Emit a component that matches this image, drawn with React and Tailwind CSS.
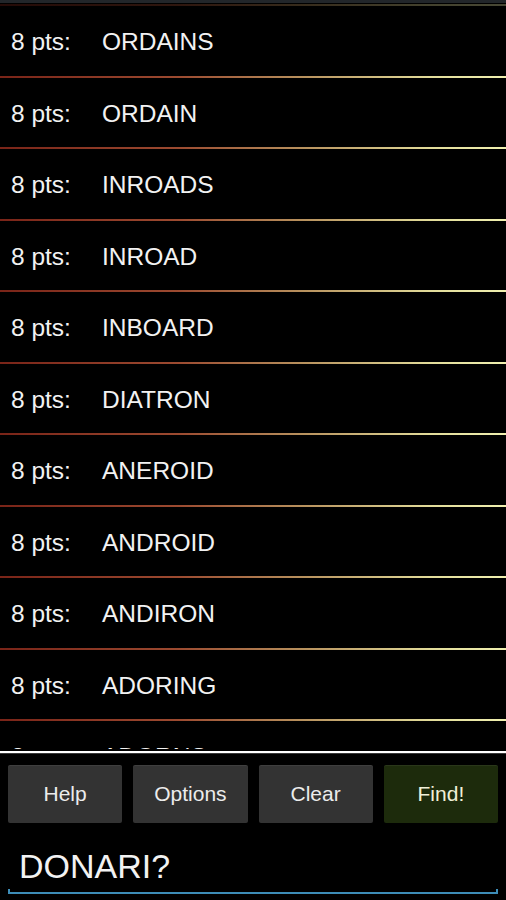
import React from "react";

const words = [
  "ORDAINS",
  "ORDAIN",
  "INROADS",
  "INROAD",
  "INBOARD",
  "DIATRON",
  "ANEROID",
  "ANDROID",
  "ANDIRON",
  "ADORING",
  "ADORNS",
];

function Divider({ faint }) {
  return (
    <div
      className={
        "h-[2px] w-full shrink-0 bg-[linear-gradient(to_right,#7a2418_0%,#9c4a30_35%,#b8925e_60%,#e2dc9a_85%,#f0f0b0_100%)] " +
        (faint ? "opacity-30" : "")
      }
    />
  );
}

function Row({ word }) {
  return (
    <>
      <div className="h-[69.5px] shrink-0 flex items-center pt-[4px] pl-[11px] text-[24.5px] text-[#f2f2f2]">
        <span className="w-[91px] shrink-0">8 pts:</span>
        <span>{word}</span>
      </div>
      <Divider />
    </>
  );
}

function Btn({ label, find }) {
  return (
    <button
      className={
        "h-[58px] rounded-[2px] flex items-center justify-center text-[21px] shadow-[0_1px_0_rgba(255,255,255,0.06)_inset] " +
        (find ? "bg-[#1d2b0c] text-[#f0f0d8]" : "bg-[#333333] text-[#ececec]")
      }
    >
      {label}
    </button>
  );
}

export default function App() {
  return (
    <div
      className="w-[506px] h-[900px] bg-black overflow-hidden flex flex-col"
      style={{ fontFamily: '"Liberation Sans", Arial, sans-serif' }}
    >
      <div className="h-[3px] shrink-0 bg-[#22262a]" />
      <div className="h-[746px] shrink-0 overflow-hidden flex flex-col">
        <div className="h-[1px] shrink-0" />
        <Divider faint />
        {words.map((w) => (
          <Row key={w} word={w} />
        ))}
      </div>
      <div className="h-[2px] shrink-0 bg-black" />
      <div className="h-[2px] shrink-0 bg-white" />
      <div className="h-[1px] shrink-0 bg-[#3a3a3a]" />
      <div className="mt-[11px] px-[8px] grid grid-cols-4 gap-[11px]">
        <Btn label="Help" />
        <Btn label="Options" />
        <Btn label="Clear" />
        <Btn label="Find!" find />
      </div>
      <div className="mt-[23px] pl-[19px] h-[40px] leading-[40px] text-[34px] text-[#f2f2f2]">
        DONARI?
      </div>
      <div className="mt-[3px] mx-[8px] h-[5px] border-x-2 border-b-2 border-[#3d8db8]" />
    </div>
  );
}
